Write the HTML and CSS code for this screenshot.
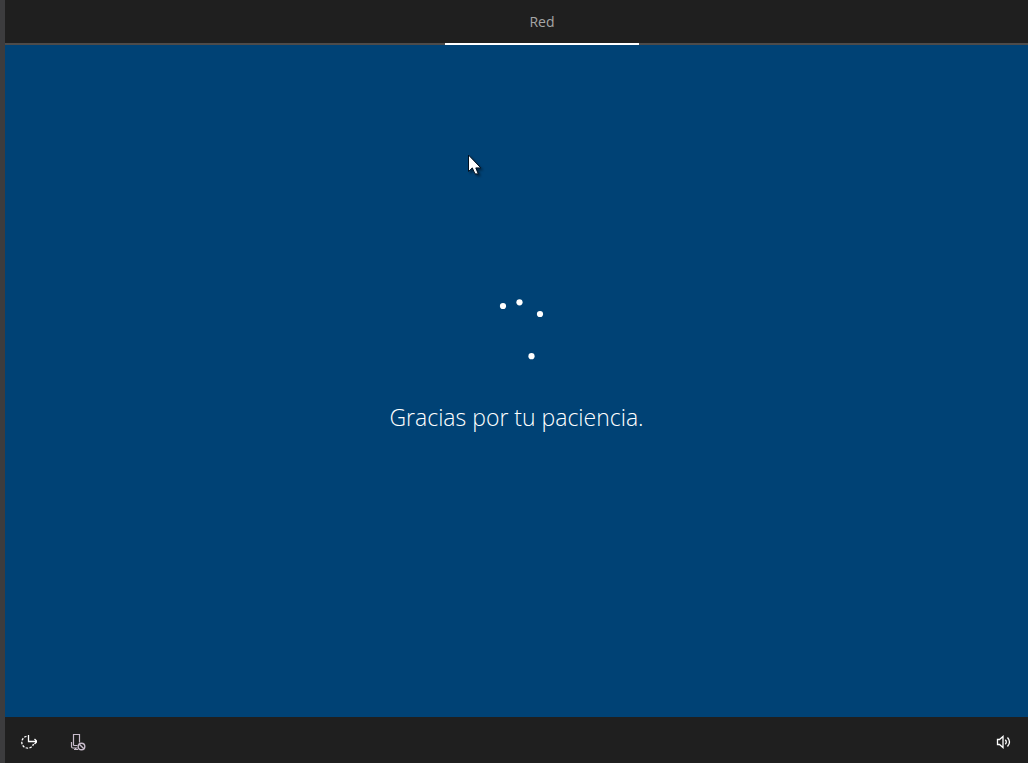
FILE: index.html
```html
<!DOCTYPE html>
<html lang="es">
<head>
<meta charset="utf-8">
<meta name="viewport" content="width=device-width, initial-scale=1">
<title>Red</title>
<link rel="stylesheet" href="styles.css">
</head>
<body class="screen">
  <header class="steps">
    <span class="step">Red</span>
  </header>
  <main class="stage">
    <svg class="spinner" viewBox="0 0 64 64" aria-hidden="true">
      <circle cx="18" cy="7" r="3.100"/>
      <circle cx="34.5" cy="3.3" r="3.100"/>
      <circle cx="55" cy="15" r="3.100"/>
      <circle cx="46.5" cy="57.200" r="3.100"/>
    </svg>
    <h1 class="message">Gracias por tu paciencia.</h1>
    <svg class="cursor" viewBox="0 0 14 22" aria-hidden="true">
      <path d="M.5 1v16.500l3.800-3.600 2.700 6h3.300l-2.500-6h5z" fill="#fff" stroke="#001020" stroke-width="1"/>
    </svg>
  </main>
  <footer class="toolbar">
    <button class="tool" type="button" aria-label="Accesibilidad">
      <svg class="icon" viewBox="0 0 18 18" fill="none" stroke="#fff" aria-hidden="true">
        <path d="M9.500 2v6.500H18M15.500 6l2.500 2.500-2.500 2.500" stroke-width="1.300"/>
        <path d="M7.500 3.300A6 6 0 1 0 14.500 11" stroke-width="1.300" stroke-dasharray="2.500 1.300"/>
      </svg>
    </button>
    <button class="tool" type="button" aria-label="Micrófono desactivado">
      <svg class="icon" viewBox="0 0 18 18" fill="none" stroke="#c8bccb" aria-hidden="true">
        <path d="M4.500 12.500v-11h6v8M2.500 9v4.500q0 1.500 1.500 1.500h4.500M4.500 12.500h4M6.500 15v2M5 16.500h4" stroke-width="1.200"/>
        <circle cx="12.500" cy="13.500" r="3.300" stroke-width="1.400"/>
        <path d="m10.300 11.300 4.500 4.500" stroke-width="1.400"/>
      </svg>
    </button>
    <button class="tool tool-end" type="button" aria-label="Volumen">
      <svg class="icon" viewBox="0 0 18 18" fill="none" stroke="#fff" aria-hidden="true">
        <path d="M3.500 6.500h2l3.500-3v11l-3.500-3h-2z" stroke-width="1.300"/>
        <path d="M11.300 6.800q2 2.200 0 4.400M13.500 4.500q4 4.500 0 9" stroke-width="1.300"/>
      </svg>
    </button>
  </footer>
</body>
</html>
```
FILE: styles.css
```css
* {
  box-sizing: border-box;
}

.screen {
  display: flex;
  flex-direction: column;
  min-height: 100vh;
  margin: 0;
  border-left: 5px solid #3c3c3e;
  background: #1f1f1f;
  color: #fff;
  font-family: "Segoe UI", "Open Sans", "Noto Sans", sans-serif;
}

.steps {
  display: flex;
  justify-content: center;
  height: 45px;
  padding-left: 51px;
  background: linear-gradient(#4d4b4a, #4d4b4a) bottom / 100% 2px no-repeat #1f1f1f;
}

.step {
  width: 194px;
  border-bottom: 2px solid #fff;
  color: #a6a6a6;
  font-size: 14px;
  line-height: 43px;
  text-align: center;
}

.stage {
  position: relative;
  display: flex;
  flex: 1;
  flex-direction: column;
  align-items: center;
  justify-content: center;
  gap: 38px;
  padding-bottom: 30px;
  background: #004275;
}

.spinner {
  width: 64px;
  height: 64px;
  fill: #fff;
}

.message {
  margin: 0;
  font-size: 23px;
  font-weight: 350;
  line-height: 32px;
}

.cursor {
  position: absolute;
  top: 109px;
  left: 463px;
  width: 14px;
  height: 22px;
  filter: drop-shadow(2px 2px 1px rgba(0, 0, 0, 0.4));
}

.toolbar {
  display: flex;
  align-items: center;
  gap: 4px;
  height: 46px;
  padding: 4px 2px 0 0;
}

.tool {
  display: flex;
  align-items: center;
  justify-content: center;
  width: 46px;
  height: 42px;
  padding: 0;
  border: 0;
  background: transparent;
}

.tool-end {
  margin-left: auto;
}

.icon {
  width: 18px;
  height: 18px;
}
```
